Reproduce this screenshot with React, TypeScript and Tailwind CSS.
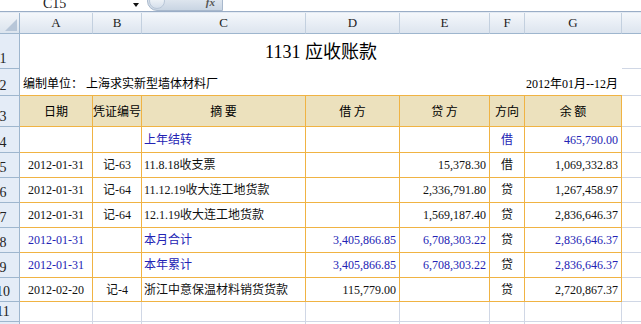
import React from 'react'

type Align = 'left' | 'center' | 'right'

interface CellData {
  text?: string
  align?: Align
  blue?: boolean
}

interface DataRow {
  n: number
  h: string
  cells: CellData[]
}

const widths = ['w-[73px]', 'w-[49px]', 'w-[164px]', 'w-[94px]', 'w-[90px]', 'w-[35px]', 'w-[97px]']
const letters = ['A', 'B', 'C', 'D', 'E', 'F', 'G']

const rows: DataRow[] = [
  {
    n: 4,
    h: 'h-[26px]',
    cells: [
      {},
      {},
      { text: '上年结转', align: 'left', blue: true },
      {},
      {},
      { text: '借', align: 'center', blue: true },
      { text: '465,790.00', align: 'right', blue: true },
    ],
  },
  {
    n: 5,
    h: 'h-[25px]',
    cells: [
      { text: '2012-01-31', align: 'center' },
      { text: '记-63', align: 'center' },
      { text: '11.8.18收支票', align: 'left' },
      {},
      { text: '15,378.30', align: 'right' },
      { text: '借', align: 'center' },
      { text: '1,069,332.83', align: 'right' },
    ],
  },
  {
    n: 6,
    h: 'h-[25px]',
    cells: [
      { text: '2012-01-31', align: 'center' },
      { text: '记-64', align: 'center' },
      { text: '11.12.19收大连工地货款', align: 'left' },
      {},
      { text: '2,336,791.80', align: 'right' },
      { text: '贷', align: 'center' },
      { text: '1,267,458.97', align: 'right' },
    ],
  },
  {
    n: 7,
    h: 'h-[25px]',
    cells: [
      { text: '2012-01-31', align: 'center' },
      { text: '记-64', align: 'center' },
      { text: '12.1.19收大连工地货款', align: 'left' },
      {},
      { text: '1,569,187.40', align: 'right' },
      { text: '贷', align: 'center' },
      { text: '2,836,646.37', align: 'right' },
    ],
  },
  {
    n: 8,
    h: 'h-[25px]',
    cells: [
      { text: '2012-01-31', align: 'center', blue: true },
      {},
      { text: '本月合计', align: 'left', blue: true },
      { text: '3,405,866.85', align: 'right', blue: true },
      { text: '6,708,303.22', align: 'right', blue: true },
      { text: '贷', align: 'center' },
      { text: '2,836,646.37', align: 'right', blue: true },
    ],
  },
  {
    n: 9,
    h: 'h-[25px]',
    cells: [
      { text: '2012-01-31', align: 'center', blue: true },
      {},
      { text: '本年累计', align: 'left', blue: true },
      { text: '3,405,866.85', align: 'right', blue: true },
      { text: '6,708,303.22', align: 'right', blue: true },
      { text: '贷', align: 'center' },
      { text: '2,836,646.37', align: 'right', blue: true },
    ],
  },
  {
    n: 10,
    h: 'h-[24px]',
    cells: [
      { text: '2012-02-20', align: 'center' },
      { text: '记-4', align: 'center' },
      { text: '浙江中意保温材料销货货款', align: 'left' },
      { text: '115,779.00', align: 'right' },
      {},
      { text: '贷', align: 'center' },
      { text: '2,720,867.37', align: 'right' },
    ],
  },
]

const alignClass: Record<Align, string> = {
  left: 'justify-start pl-[2px]',
  center: 'justify-center',
  right: 'justify-end pr-[3px]',
}

// row numbers are centred in a wider header that the screenshot crops on the left
function RowNum({ n, h }: { n: number | string; h: string }) {
  return (
    <div className={`w-[20px] shrink-0 overflow-hidden bg-[#e4ecf7] border-r border-b border-[#9eb6ce] flex items-end ${h}`}>
      <div className="w-[34px] -ml-[14px] shrink-0 text-center text-[14px] leading-none pb-[2px] text-[#222]">{n}</div>
    </div>
  )
}

function FormulaBar() {
  return (
    <div className="h-[11px] flex bg-white overflow-hidden">
      <div className="w-[133px] shrink-0 pl-[43px] -mt-[3px] text-[14px] leading-none text-[#222]">C15</div>
      <div className="w-[14px] shrink-0 pt-[3px]">
        <div className="w-0 h-0 border-l-[3px] border-r-[3px] border-t-[4px] border-l-transparent border-r-transparent border-t-[#111]" />
      </div>
      <div className="w-[76px] h-[20px] -mt-[9px] shrink-0 rounded-l-full rounded-r-[3px] border border-[#a8b8cc] bg-linear-to-b from-[#eef2f7] to-[#c9d5e3] flex items-end">
        <div className="w-[16px] h-[16px] ml-[1px] mb-[1px] rounded-full bg-linear-to-b from-[#ffffff] to-[#d5dfeb] border border-[#b9c7d8]" />
        <div className="flex-1 text-right pr-[7px] pb-[2px] text-[11px] leading-none italic font-bold text-[#555]">fx</div>
      </div>
      <div className="flex-1 bg-white" />
    </div>
  )
}

function ColumnHeader() {
  return (
    <div className="flex h-[21px]">
      <div className="w-[20px] shrink-0 bg-linear-to-b from-[#f2f5f9] to-[#dbe4ee] border-r border-b border-[#9eb6ce] flex items-end justify-end p-[2px]">
        <svg width="12" height="12" viewBox="0 0 12 12">
          <polygon points="12,0 12,12 0,12" fill="#b7c6d8" />
        </svg>
      </div>
      {letters.map((l, i) => (
        <div
          key={l}
          className={`${widths[i]} shrink-0 bg-linear-to-b from-[#f4f7fb] to-[#dde5ef] border-r border-b border-r-[#c3d0df] border-b-[#9eb6ce] flex items-center justify-center text-[13px] text-[#222]`}
        >
          {l}
        </div>
      ))}
      <div className="flex-1 bg-linear-to-b from-[#f4f7fb] to-[#dde5ef] border-b border-[#9eb6ce]" />
    </div>
  )
}

export default function App() {
  return (
    <div className="w-[641px] h-[324px] overflow-hidden bg-white font-['Liberation_Serif','Noto_Sans_CJK_SC',serif] text-black">
      <FormulaBar />
      <div className="h-[1px] bg-[#9aadc6]" />
      <div className="h-[1px] bg-[#e3eaf3]" />
      <ColumnHeader />

      {/* row 1: title */}
      <div className="flex h-[35px]">
        <RowNum n={1} h="h-[35px]" />
        <div className="w-[602px] shrink-0 flex items-center justify-center text-[18px] leading-none">
          1131 应收账款
        </div>
        <div className="flex-1 border-b border-[#d0d7e5]" />
      </div>

      {/* row 2: unit and period */}
      <div className="flex h-[27px]">
        <RowNum n={2} h="h-[27px]" />
        <div className="w-[505px] shrink-0 flex items-center pt-[3px] pl-[3px] text-[12px] leading-none border-b border-[#f0b343]">
          编制单位： 上海求实新型墙体材料厂
        </div>
        <div className="w-[97px] shrink-0 flex items-center justify-end pt-[3px] pr-[4px] text-[12px] leading-none border-b border-[#f0b343] whitespace-nowrap">
          2012年01月--12月
        </div>
        <div className="flex-1 border-b border-[#d0d7e5]" />
      </div>

      {/* row 3: table header */}
      <div className="flex h-[31px]">
        <RowNum n={3} h="h-[31px]" />
        {['日期', '凭证编号', '摘 要', '借 方', '贷 方', '方向', '余 额'].map((t, i) => (
          <div
            key={t}
            className={`${widths[i]} shrink-0 bg-[#ece1bd] border-r border-b border-[#f0b343] flex items-center justify-center text-[12px] leading-none font-['Noto_Sans_CJK_SC',sans-serif] whitespace-pre`}
          >
            {t}
          </div>
        ))}
        <div className="flex-1 border-b border-[#d0d7e5]" />
      </div>

      {rows.map(r => (
        <div key={r.n} className={`flex ${r.h}`}>
          <RowNum n={r.n} h={r.h} />
          {r.cells.map((c, i) => (
            <div
              key={i}
              className={`${widths[i]} shrink-0 border-r border-b border-[#f0b343] flex items-center whitespace-nowrap overflow-hidden text-[12px] leading-none ${alignClass[c.align ?? 'left']} ${c.blue ? 'text-[#2323b4]' : 'text-[#111]'}`}
            >
              {c.text}
            </div>
          ))}
          <div className="flex-1 border-b border-[#d0d7e5]" />
        </div>
      ))}

      {/* row 11: empty */}
      <div className="flex h-[20px]">
        <RowNum n={11} h="h-[20px]" />
        {widths.map((w, i) => (
          <div key={i} className={`${w} shrink-0 border-r border-b border-[#d0d7e5]`} />
        ))}
        <div className="flex-1 border-b border-[#d0d7e5]" />
      </div>

      {/* row 12: cut off */}
      <div className="flex h-[20px]">
        <RowNum n={12} h="h-[20px]" />
        {widths.map((w, i) => (
          <div key={i} className={`${w} shrink-0 border-r border-[#d0d7e5]`} />
        ))}
        <div className="flex-1" />
      </div>
    </div>
  )
}
